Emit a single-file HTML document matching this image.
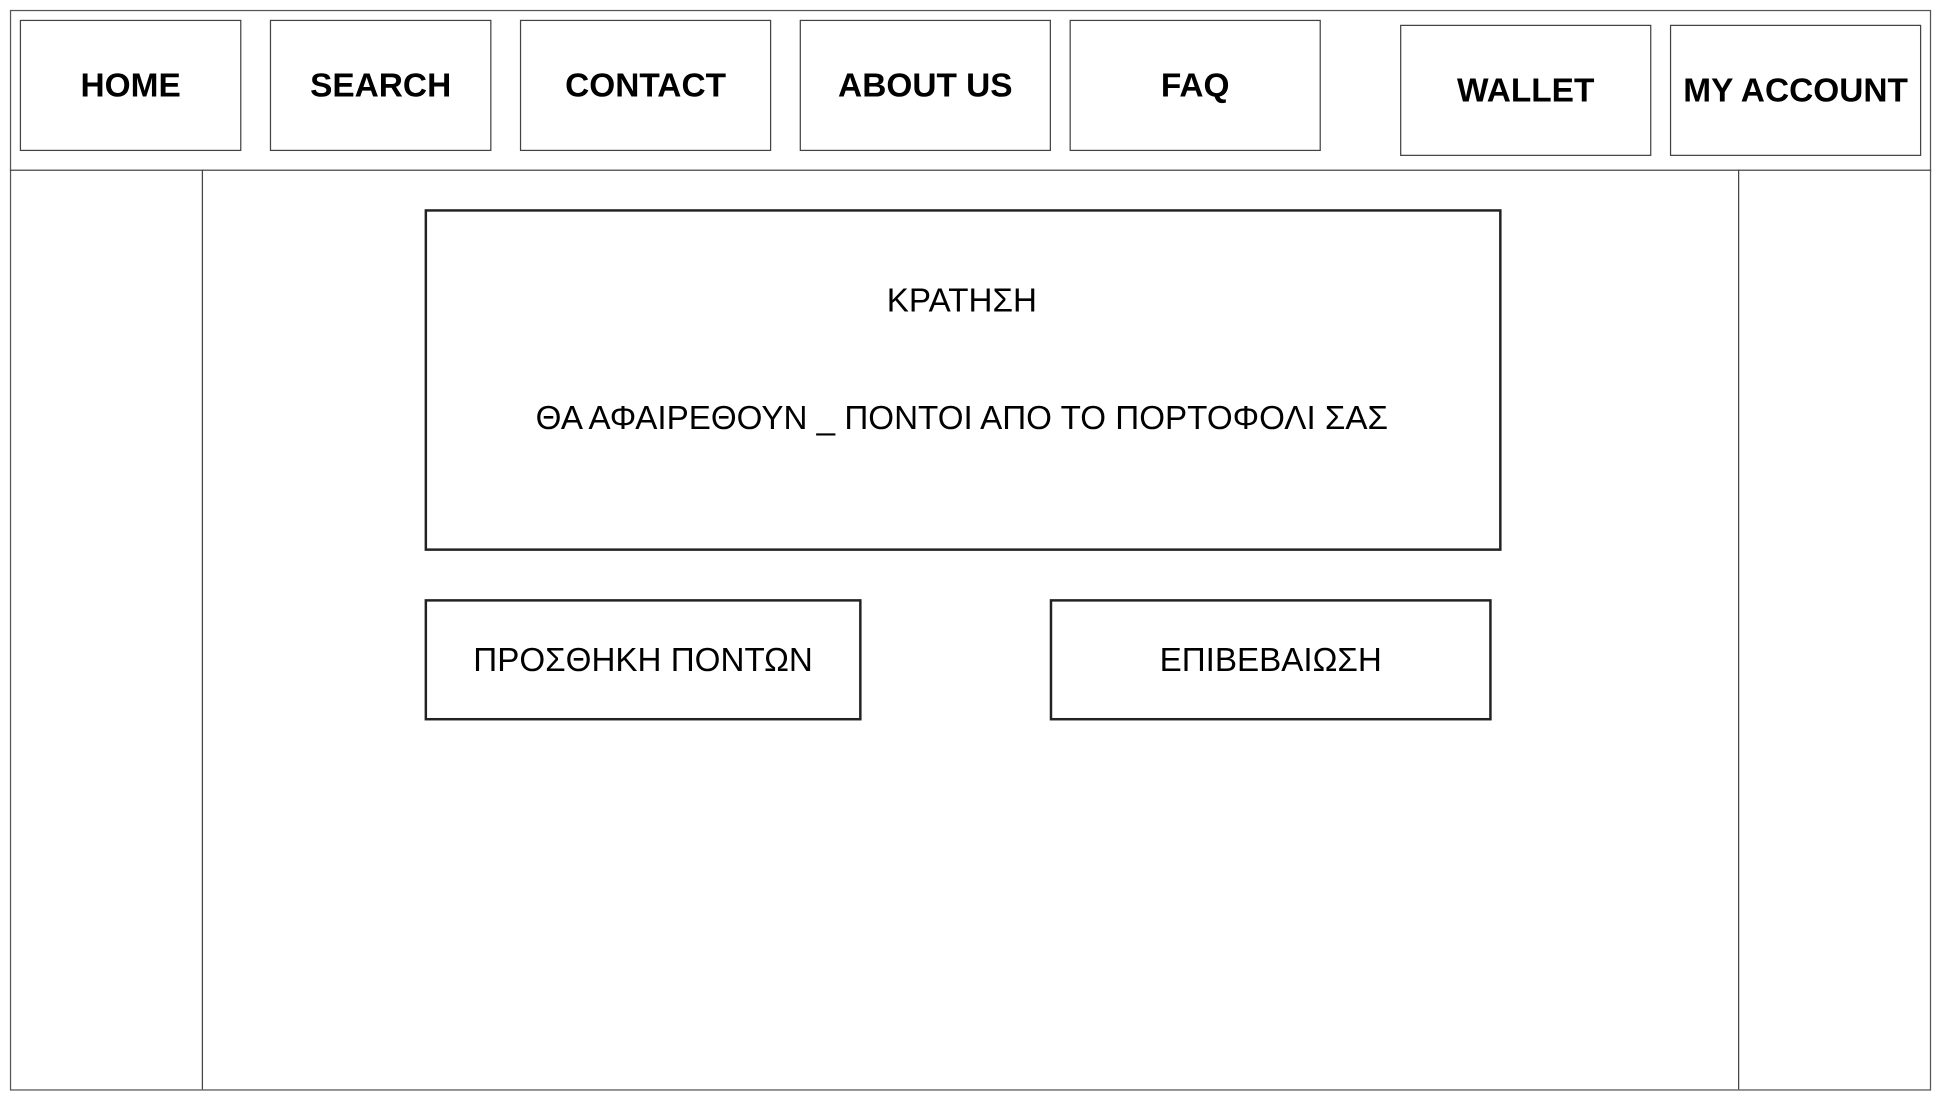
<!DOCTYPE html>
<html><head><meta charset="utf-8">
<style>
html,body{margin:0;padding:0;background:#fff;width:1941px;height:1101px;overflow:hidden}
#w{position:absolute;left:0;top:0;width:1568px;height:890px;transform:scale(1.2379);transform-origin:0 0;font-family:"Liberation Sans",Arial,sans-serif;color:#000}
.b{position:absolute;box-sizing:border-box;border:1px solid #444;display:flex;align-items:center;justify-content:center}
.n{font-weight:bold;font-size:27px}
.t{position:absolute;font-size:26.8px;white-space:nowrap;transform:translate(-50%,-50%)}
.l{position:absolute;background:#444}
</style></head><body><div id="w">
<div class="b" style="left:8px;top:8px;width:1552px;height:873px;border-color:#555"></div>
<div class="l" style="left:8px;top:137px;width:1552px;height:1px"></div>
<div class="l" style="left:163px;top:137px;width:1px;height:743px"></div>
<div class="l" style="left:1404px;top:137px;width:1px;height:743px"></div>
<div class="b n" style="left:16px;top:16px;width:179px;height:106px">HOME</div>
<div class="b n" style="left:218px;top:16px;width:179px;height:106px">SEARCH</div>
<div class="b n" style="left:420px;top:16px;width:203px;height:106px">CONTACT</div>
<div class="b n" style="left:646px;top:16px;width:203px;height:106px">ABOUT US</div>
<div class="b n" style="left:864px;top:16px;width:203px;height:106px">FAQ</div>
<div class="b n" style="left:1131px;top:20px;width:203px;height:106px">WALLET</div>
<div class="b n" style="left:1349px;top:20px;width:203px;height:106px">MY ACCOUNT</div>
<div class="b" style="left:343px;top:169px;width:870px;height:276px;border:2px solid #222"></div>
<div class="t" style="left:777px;top:243px">ΚΡΑΤΗΣΗ</div>
<div class="t" style="left:777px;top:338px">ΘΑ ΑΦΑΙΡΕΘΟΥΝ _ ΠΟΝΤΟΙ ΑΠΟ ΤΟ ΠΟΡΤΟΦΟΛΙ ΣΑΣ</div>
<div class="b" style="left:343px;top:484px;width:353px;height:98px;border:2px solid #222;font-size:26.8px">ΠΡΟΣΘΗΚΗ ΠΟΝΤΩΝ</div>
<div class="b" style="left:848px;top:484px;width:357px;height:98px;border:2px solid #222;font-size:26.8px">ΕΠΙΒΕΒΑΙΩΣΗ</div>
</div></body></html>
